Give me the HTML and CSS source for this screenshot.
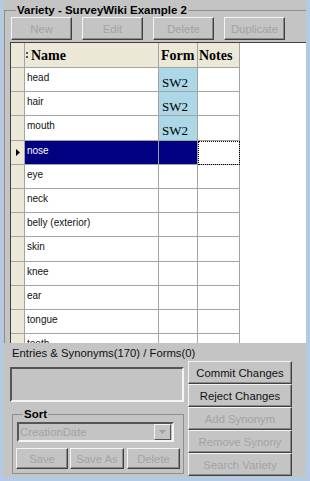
FILE: index.html
```html
<!DOCTYPE html>
<html lang="en">
<head>
    <meta charset="UTF-8">
    <title>Variety - SurveyWiki Example 2</title>
    <link rel="stylesheet" href="styles.css">
</head>
<body>
    <div class="panel">
        <fieldset class="variety">
            <legend>Variety - SurveyWiki Example 2</legend>
            <div class="toolbar">
                <button class="btn" disabled>New</button>
                <button class="btn" disabled>Edit</button>
                <button class="btn" disabled>Delete</button>
                <button class="btn" disabled>Duplicate</button>
            </div>
            <div class="grid">
                <div class="row head-row">
                    <div class="cell rowhead"></div>
                    <div class="cell col-name"><span class="grip"></span>Name</div>
                    <div class="cell col-form">Form</div>
                    <div class="cell col-notes">Notes</div>
                </div>
                <div class="row">
                    <div class="cell rowhead"></div>
                    <div class="cell name">head</div>
                    <div class="cell form has-form">SW2</div>
                    <div class="cell"></div>
                </div>
                <div class="row">
                    <div class="cell rowhead"></div>
                    <div class="cell name">hair</div>
                    <div class="cell form has-form">SW2</div>
                    <div class="cell"></div>
                </div>
                <div class="row">
                    <div class="cell rowhead"></div>
                    <div class="cell name">mouth</div>
                    <div class="cell form has-form">SW2</div>
                    <div class="cell"></div>
                </div>
                <div class="row selected">
                    <div class="cell rowhead">
                        <svg class="pointer" width="4" height="7" viewBox="0 0 4 7"><path d="M0 0 L4 3.5 L0 7 Z" fill="#000"/></svg>
                    </div>
                    <div class="cell name">nose</div>
                    <div class="cell form"></div>
                    <div class="cell focus"></div>
                </div>
                <div class="row">
                    <div class="cell rowhead"></div>
                    <div class="cell name">eye</div>
                    <div class="cell form"></div>
                    <div class="cell"></div>
                </div>
                <div class="row">
                    <div class="cell rowhead"></div>
                    <div class="cell name">neck</div>
                    <div class="cell form"></div>
                    <div class="cell"></div>
                </div>
                <div class="row">
                    <div class="cell rowhead"></div>
                    <div class="cell name">belly (exterior)</div>
                    <div class="cell form"></div>
                    <div class="cell"></div>
                </div>
                <div class="row">
                    <div class="cell rowhead"></div>
                    <div class="cell name">skin</div>
                    <div class="cell form"></div>
                    <div class="cell"></div>
                </div>
                <div class="row">
                    <div class="cell rowhead"></div>
                    <div class="cell name">knee</div>
                    <div class="cell form"></div>
                    <div class="cell"></div>
                </div>
                <div class="row">
                    <div class="cell rowhead"></div>
                    <div class="cell name">ear</div>
                    <div class="cell form"></div>
                    <div class="cell"></div>
                </div>
                <div class="row">
                    <div class="cell rowhead"></div>
                    <div class="cell name">tongue</div>
                    <div class="cell form"></div>
                    <div class="cell"></div>
                </div>
                <div class="row">
                    <div class="cell rowhead"></div>
                    <div class="cell name">teeth</div>
                    <div class="cell form"></div>
                    <div class="cell"></div>
                </div>
            </div>
        </fieldset>

        <div class="count">Entries &amp; Synonyms(170) / Forms(0)</div>

        <div class="bottom">
            <div class="left">
                <div class="textbox"></div>
                <fieldset class="sort">
                    <legend>Sort</legend>
                    <div class="combo">
                        <span>CreationDate</span>
                        <span class="drop">
                            <svg width="7" height="4" viewBox="0 0 7 4"><path d="M0 0 L7 0 L3.5 4 Z" fill="#a0a0a0"/></svg>
                        </span>
                    </div>
                    <div class="sort-buttons">
                        <button class="btn save" disabled>Save</button>
                        <button class="btn save-as" disabled>Save As</button>
                        <button class="btn del" disabled>Delete</button>
                    </div>
                </fieldset>
            </div>
            <div class="actions">
                <button class="btn">Commit Changes</button>
                <button class="btn">Reject Changes</button>
                <button class="btn" disabled>Add Synonym</button>
                <button class="btn" disabled>Remove Synony</button>
                <button class="btn" disabled>Search Variety</button>
            </div>
        </div>
    </div>
</body>
</html>
```

FILE: styles.css
```css
body {
    margin: 0;
    background-color: #b2cae5;
    font-family: "Liberation Sans", Arial, sans-serif;
    font-size: 11.3px;
}
.panel {
    width: 303px;
    height: 477px;
    margin-left: 3px;
    background-color: #c4c4c4;
    overflow: hidden;
}

/* Group boxes */
fieldset {
    margin: 0;
    padding: 0;
    border: 1px solid #8e8e8e;
    min-width: 0;
}
legend {
    font-weight: bold;
    font-size: 11.5px;
    line-height: 14px;
    padding: 0 1px;
}
.variety {
    margin: 3px 0 0 1px;
    padding: 0 0 0 6px;
    border-right: none;
    border-bottom: none;
}
.variety legend {
    margin-left: 5px;
}

/* Buttons */
.btn {
    display: block;
    height: 23px;
    padding: 0;
    background-color: #c4c4c4;
    border: 1px solid;
    border-color: #f4f4f4 #404040 #404040 #f4f4f4;
    box-shadow: inset -1px -1px 0 #888;
    font-family: "Liberation Sans", Arial, sans-serif;
    font-size: 11.3px;
    color: #111;
}
.btn:disabled {
    color: #a3a3a3;
}
.toolbar {
    display: flex;
    gap: 10px;
}
.toolbar .btn {
    width: 61px;
}

/* Grid */
.grid {
    margin: 2px 0 0 -1px;
    width: 296px;
    height: 301px;
    background-color: #fff;
    border-top: 1px solid #404040;
    border-left: 1px solid #404040;
    box-sizing: border-box;
    overflow: hidden;
}
.row {
    display: grid;
    grid-template-columns: 14px 134px 39px 42px;
    height: 24.2px;
}
.cell {
    box-sizing: border-box;
    border-right: 1px solid #a3a3a3;
    border-bottom: 1px solid #a3a3a3;
    font-size: 10px;
    line-height: 12px;
}
.rowhead {
    background-color: #ebe8d7;
    display: flex;
    align-items: center;
    justify-content: center;
}
.head-row {
    height: 25px;
}
.head-row .cell {
    background-color: #ebe8d7;
    font-family: "Liberation Serif", "Times New Roman", serif;
    font-weight: bold;
    font-size: 14px;
    line-height: 16px;
    padding-top: 5px;
}
.col-name {
    display: flex;
    align-items: flex-start;
}
.grip {
    width: 0;
    height: 6px;
    margin: 4px 3px 0 1px;
    border-left: 2px dotted #555;
}
.col-form {
    padding-left: 2px;
}
.col-notes {
    padding-left: 1px;
}
.name {
    padding: 4px 0 0 2px;
    color: #111;
}
.form {
    font-family: "Liberation Serif", "Times New Roman", serif;
    font-size: 13px;
    line-height: 15px;
    padding: 7px 0 0 3px;
}
.has-form {
    background-color: #acd7e6;
}
.selected .name,
.selected .form {
    background-color: #000080;
    color: #fff;
}
.focus {
    outline: 1px dotted #000;
    outline-offset: -1px;
}
.pointer {
    display: block;
    margin-left: 1px;
}

/* Bottom area */
.count {
    padding: 3px 0 0 9px;
    line-height: 14px;
    color: #111;
}
.bottom {
    display: flex;
    margin-top: 1px;
}
.left {
    width: 174px;
    margin-left: 7px;
}
.textbox {
    margin-top: 6px;
    height: 35px;
    box-sizing: border-box;
    border: 2px solid;
    border-color: #555 #f4f4f4 #f4f4f4 #555;
}
.sort {
    margin: 5px 0 0 2px;
    width: 172px;
    height: 67px;
    box-sizing: border-box;
    padding: 0 0 0 4px;
}
.sort legend {
    margin-left: 6px;
}
.combo {
    display: flex;
    align-items: center;
    justify-content: space-between;
    width: 157px;
    height: 20px;
    margin-top: 1px;
    box-sizing: border-box;
    border: 2px solid;
    border-color: #555 #f4f4f4 #f4f4f4 #555;
    padding-left: 1px;
    color: #a3a3a3;
}
.drop {
    display: flex;
    align-items: center;
    justify-content: center;
    width: 15px;
    height: 14px;
    margin-right: 1px;
    border: 1px solid;
    border-color: #f4f4f4 #555 #555 #f4f4f4;
}
.sort-buttons {
    display: flex;
    margin: 6px 0 0 -1px;
}
.sort-buttons .btn {
    height: 21px;
}
.save {
    width: 52px;
}
.save-as {
    width: 54px;
    margin-left: 2px;
}
.del {
    width: 53px;
    margin-left: 3px;
}
.actions {
    margin-left: 4px;
}
.actions .btn {
    width: 104px;
}
```
